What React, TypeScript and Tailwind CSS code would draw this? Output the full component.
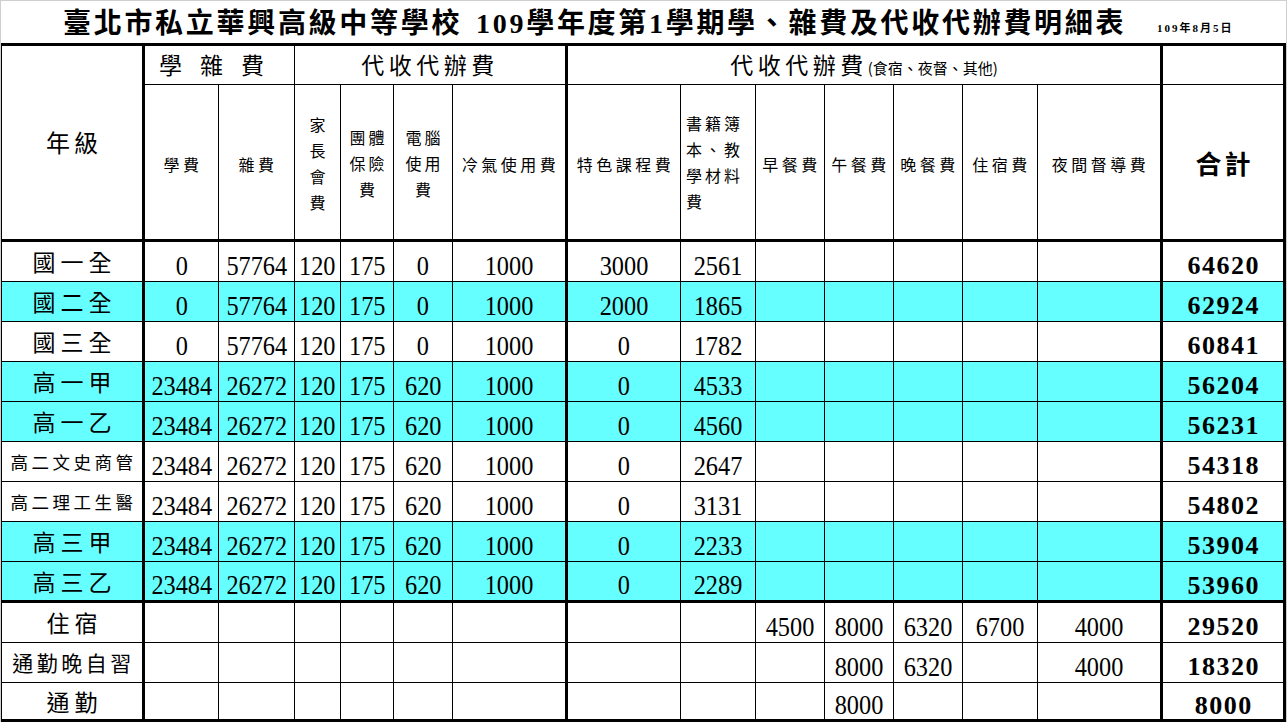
import React from 'react';

type Row = {
  label: string;
  kind: 'lg' | 'sm' | 'md';
  cyan?: boolean;
  vals: string[];
  total: string;
  thick?: boolean;
};

const E = '';
const rows: Row[] = [
  { label: '國一全', kind: 'lg', vals: ['0', '57764', '120', '175', '0', '1000', '3000', '2561', E, E, E, E, E], total: '64620' },
  { label: '國二全', kind: 'lg', cyan: true, vals: ['0', '57764', '120', '175', '0', '1000', '2000', '1865', E, E, E, E, E], total: '62924' },
  { label: '國三全', kind: 'lg', vals: ['0', '57764', '120', '175', '0', '1000', '0', '1782', E, E, E, E, E], total: '60841' },
  { label: '高一甲', kind: 'lg', cyan: true, vals: ['23484', '26272', '120', '175', '620', '1000', '0', '4533', E, E, E, E, E], total: '56204' },
  { label: '高一乙', kind: 'lg', cyan: true, vals: ['23484', '26272', '120', '175', '620', '1000', '0', '4560', E, E, E, E, E], total: '56231' },
  { label: '高二文史商管', kind: 'sm', vals: ['23484', '26272', '120', '175', '620', '1000', '0', '2647', E, E, E, E, E], total: '54318' },
  { label: '高二理工生醫', kind: 'sm', vals: ['23484', '26272', '120', '175', '620', '1000', '0', '3131', E, E, E, E, E], total: '54802' },
  { label: '高三甲', kind: 'lg', cyan: true, vals: ['23484', '26272', '120', '175', '620', '1000', '0', '2233', E, E, E, E, E], total: '53904' },
  { label: '高三乙', kind: 'lg', cyan: true, thick: true, vals: ['23484', '26272', '120', '175', '620', '1000', '0', '2289', E, E, E, E, E], total: '53960' },
  { label: '住宿', kind: 'lg', vals: [E, E, E, E, E, E, E, E, '4500', '8000', '6320', '6700', '4000'], total: '29520' },
  { label: '通勤晚自習', kind: 'md', vals: [E, E, E, E, E, E, E, E, E, '8000', '6320', E, '4000'], total: '18320' },
  { label: '通勤', kind: 'lg', thick: true, vals: [E, E, E, E, E, E, E, E, E, '8000', E, E, E], total: '8000' },
];

const thickCols = [1, 7, 14, 15];

function Cell({
  col,
  bottomThick,
  cyan,
  className = '',
  children,
}: {
  col: number;
  bottomThick?: boolean;
  cyan?: boolean;
  className?: string;
  children?: React.ReactNode;
}) {
  const r = thickCols.includes(col) ? 'border-r-[3px]' : 'border-r';
  const b = bottomThick ? 'border-b-[3px]' : 'border-b';
  const bg = cyan ? 'bg-[#66ffff]' : 'bg-white';
  return <div className={`flex items-center justify-center border-black ${r} ${b} ${bg} ${className}`}>{children}</div>;
}

function HeadLabel({ text }: { text: string }) {
  return <span className="text-[16px] leading-none tracking-[3.5px] pl-[3px]">{text}</span>;
}

function Lines({ lines, left }: { lines: string[]; left?: boolean }) {
  return (
    <div className={`flex flex-col text-[16px] leading-[26px] tracking-[3px] ${left ? 'items-start w-full pl-[5px]' : 'items-center pl-[3px]'}`}>
      {lines.map((l, i) => (
        <span key={i}>{l}</span>
      ))}
    </div>
  );
}

export default function App() {
  return (
    <div className="w-[1287px] h-[722px] bg-white border-l border-t border-r border-[#cfcfcf] overflow-hidden text-black font-['Liberation_Serif','Noto_Sans_CJK_TC',serif]">
      {/* Title */}
      <div className="grid grid-cols-[1156px_1fr] h-[42px] items-center">
        <div className="pl-[62px] pt-[4px] flex items-center font-bold text-[28px] leading-none tracking-[2.7px] whitespace-nowrap">
          <span>臺北市私立華興高級中等學校</span>
          <span className="ml-[14px]">109學年度第1學期學、雜費及代收代辦費明細表</span>
        </div>
        <div className="pt-[12px] font-bold text-[11px] leading-none tracking-[2px] whitespace-nowrap">109年8月5日</div>
      </div>

      {/* Table */}
      <div className="grid grid-cols-[143px_74px_76px_46px_53px_59px_115px_113px_75px_69px_69px_69px_75px_125px_123px] grid-rows-[39px_157px_40px_40px_40px_40px_40px_40px_40px_40px_41px_40px_40px_39px] w-[1285px] border-t-[3px] border-l border-black">
        {/* header row 1 */}
        <Cell col={1} bottomThick className="row-span-2 pt-[2px]">
          <span className="text-[24px] leading-none tracking-[4px] pl-[4px]">年級</span>
        </Cell>
        <Cell col={3} className="col-span-2 pt-[3px]">
          <span className="text-[23px] leading-none tracking-[18px] pl-[2px]">學雜費</span>
        </Cell>
        <Cell col={7} className="col-span-4 pt-[3px]">
          <span className="text-[23px] leading-none tracking-[4.5px]">代收代辦費</span>
        </Cell>
        <Cell col={14} className="col-span-7 pt-[3px]">
          <span className="flex items-baseline leading-none">
            <span className="text-[23px] tracking-[4.5px]">代收代辦費</span>
            <span className="text-[15px] font-['Noto_Sans_CJK_TC',sans-serif]">(食宿、夜督、其他)</span>
          </span>
        </Cell>
        <Cell col={15} />

        {/* header row 2 */}
        <Cell col={2} bottomThick className="pt-[7px]"><HeadLabel text="學費" /></Cell>
        <Cell col={3} bottomThick className="pt-[7px]"><HeadLabel text="雜費" /></Cell>
        <Cell col={4} bottomThick className="pt-[6px]"><Lines lines={['家', '長', '會', '費']} /></Cell>
        <Cell col={5} bottomThick className="pt-[6px]"><Lines lines={['團體', '保險', '費']} /></Cell>
        <Cell col={6} bottomThick className="pt-[6px]"><Lines lines={['電腦', '使用', '費']} /></Cell>
        <Cell col={7} bottomThick className="pt-[7px]"><HeadLabel text="冷氣使用費" /></Cell>
        <Cell col={8} bottomThick className="pt-[7px]"><HeadLabel text="特色課程費" /></Cell>
        <Cell col={9} bottomThick className="pt-[4px]"><Lines left lines={['書籍簿', '本、教', '學材料', '費']} /></Cell>
        <Cell col={10} bottomThick className="pt-[7px]"><HeadLabel text="早餐費" /></Cell>
        <Cell col={11} bottomThick className="pt-[7px]"><HeadLabel text="午餐費" /></Cell>
        <Cell col={12} bottomThick className="pt-[7px]"><HeadLabel text="晚餐費" /></Cell>
        <Cell col={13} bottomThick className="pt-[7px]"><HeadLabel text="住宿費" /></Cell>
        <Cell col={14} bottomThick className="pt-[7px]"><HeadLabel text="夜間督導費" /></Cell>
        <Cell col={15} bottomThick className="pt-[8px]">
          <span className="text-[26px] font-bold leading-none tracking-[3px] pl-[3px]">合計</span>
        </Cell>

        {/* data rows */}
        {rows.map((row, ri) => (
          <React.Fragment key={ri}>
            <Cell col={1} bottomThick={row.thick} cyan={row.cyan} className="pt-[4px]">
              {row.kind === 'lg' && <span className="text-[23px] leading-none tracking-[5px] pl-[5px]">{row.label}</span>}
              {row.kind === 'sm' && <span className="text-[17.5px] leading-none tracking-[3.5px] pl-[3px]">{row.label}</span>}
              {row.kind === 'md' && <span className="text-[21px] leading-none tracking-[3.5px] pl-[3px]">{row.label}</span>}
            </Cell>
            {row.vals.map((v, vi) => (
              <Cell key={vi} col={vi + 2} bottomThick={row.thick} cyan={row.cyan} className="pt-[9px]">
                <span className="inline-block scale-x-90 text-[27px] leading-none whitespace-nowrap">{v}</span>
              </Cell>
            ))}
            <Cell col={15} bottomThick={row.thick} cyan={row.cyan} className="pt-[9px]">
              <span className="text-[26px] font-bold leading-none tracking-[1.5px] pl-[1.5px]">{row.total}</span>
            </Cell>
          </React.Fragment>
        ))}
      </div>
    </div>
  );
}
